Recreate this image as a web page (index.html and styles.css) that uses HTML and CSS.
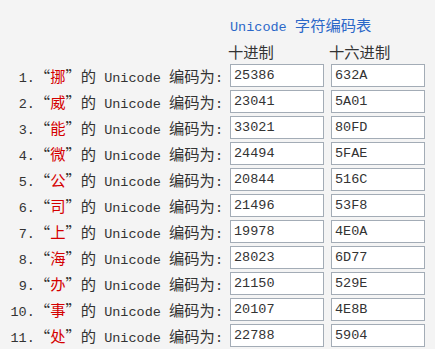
FILE: index.html
```html
<!DOCTYPE html>
<html lang="zh-CN">
<head>
<meta charset="utf-8">
<title>Unicode 字符编码表</title>
<link rel="stylesheet" href="styles.css">
</head>
<body>
<div class="page">
  <div class="grid">
    <div class="title"><span class="m">Unicode</span> <span class="c">字符编码表</span></div>
    <div class="colhead first"><span class="c">十进制</span></div>
    <div class="colhead"><span class="c">十六进制</span></div>

    <div class="lbl"><span class="m">1.</span><span class="c q">“<span class="red">挪</span>”的</span><span class="m"> Unicode </span><span class="c">编码为</span><span class="m">:</span></div>
    <div class="box">25386</div><div class="box">632A</div>

    <div class="lbl"><span class="m">2.</span><span class="c q">“<span class="red">威</span>”的</span><span class="m"> Unicode </span><span class="c">编码为</span><span class="m">:</span></div>
    <div class="box">23041</div><div class="box">5A01</div>

    <div class="lbl"><span class="m">3.</span><span class="c q">“<span class="red">能</span>”的</span><span class="m"> Unicode </span><span class="c">编码为</span><span class="m">:</span></div>
    <div class="box">33021</div><div class="box">80FD</div>

    <div class="lbl"><span class="m">4.</span><span class="c q">“<span class="red">微</span>”的</span><span class="m"> Unicode </span><span class="c">编码为</span><span class="m">:</span></div>
    <div class="box">24494</div><div class="box">5FAE</div>

    <div class="lbl"><span class="m">5.</span><span class="c q">“<span class="red">公</span>”的</span><span class="m"> Unicode </span><span class="c">编码为</span><span class="m">:</span></div>
    <div class="box">20844</div><div class="box">516C</div>

    <div class="lbl"><span class="m">6.</span><span class="c q">“<span class="red">司</span>”的</span><span class="m"> Unicode </span><span class="c">编码为</span><span class="m">:</span></div>
    <div class="box">21496</div><div class="box">53F8</div>

    <div class="lbl"><span class="m">7.</span><span class="c q">“<span class="red">上</span>”的</span><span class="m"> Unicode </span><span class="c">编码为</span><span class="m">:</span></div>
    <div class="box">19978</div><div class="box">4E0A</div>

    <div class="lbl"><span class="m">8.</span><span class="c q">“<span class="red">海</span>”的</span><span class="m"> Unicode </span><span class="c">编码为</span><span class="m">:</span></div>
    <div class="box">28023</div><div class="box">6D77</div>

    <div class="lbl"><span class="m">9.</span><span class="c q">“<span class="red">办</span>”的</span><span class="m"> Unicode </span><span class="c">编码为</span><span class="m">:</span></div>
    <div class="box">21150</div><div class="box">529E</div>

    <div class="lbl"><span class="m">10.</span><span class="c q">“<span class="red">事</span>”的</span><span class="m"> Unicode </span><span class="c">编码为</span><span class="m">:</span></div>
    <div class="box">20107</div><div class="box">4E8B</div>

    <div class="lbl"><span class="m">11.</span><span class="c q">“<span class="red">处</span>”的</span><span class="m"> Unicode </span><span class="c">编码为</span><span class="m">:</span></div>
    <div class="box">22788</div><div class="box">5904</div>
  </div>
</div>
</body>
</html>
```
FILE: styles.css
```css
html, body {
  margin: 0;
  padding: 0;
  background: #f4f4f4;
}
body {
  font-family: "Liberation Mono", "Noto Sans CJK SC", monospace;
  font-size: 13.5px;
  color: #333;
}
.page {
  padding: 14px 10px 0 0;
}
.grid {
  display: grid;
  grid-template-columns: 1fr 94px 94px;
  column-gap: 7px;
  row-gap: 3px;
}
.m {
  font-family: "Liberation Mono", monospace;
  font-size: 13.5px;
  white-space: pre;
}
.c {
  font-family: "Noto Sans CJK SC", sans-serif;
  font-size: 15.3px;
}
.q {
  font-feature-settings: "fwid" 1;
}
.red {
  color: #d40000;
}
.title {
  grid-column: 2 / 4;
  color: #2b67c8;
  line-height: 20px;
  height: 20px;
  white-space: nowrap;
  margin-bottom: 4px;
}
.colhead {
  line-height: 20px;
  height: 20px;
  margin-left: -2px;
  white-space: nowrap;
}
.colhead.first {
  grid-column: 2;
}
.lbl {
  grid-column: 1;
  text-align: right;
  white-space: nowrap;
  line-height: 23px;
  height: 23px;
}
.box {
  box-sizing: border-box;
  height: 23px;
  background: #fff;
  border: 1px solid #a3acb6;
  padding: 0 3px;
  line-height: 21px;
  font-family: "Liberation Mono", monospace;
  font-size: 13.5px;
  color: #333;
}
```
